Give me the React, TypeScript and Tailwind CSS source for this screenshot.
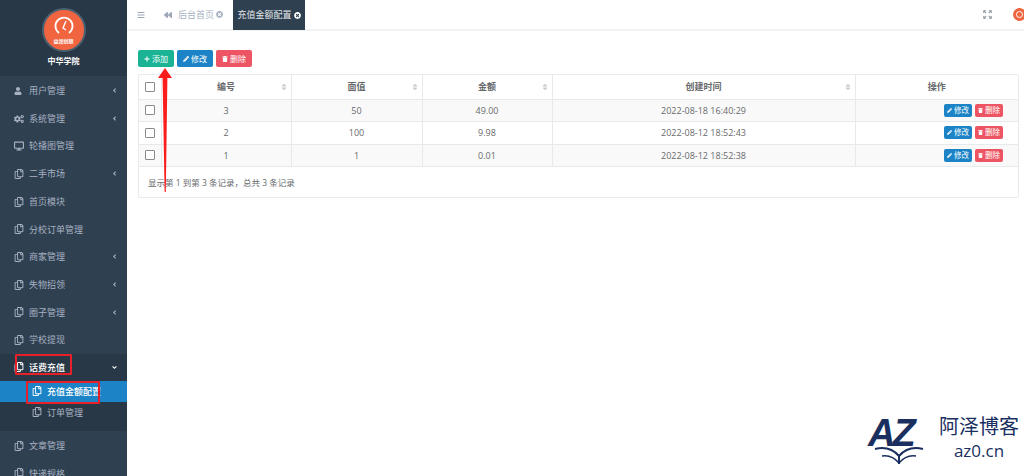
import React from 'react';
import {
  FaAngleDown,
  FaAngleLeft,
  FaBars,
  FaCogs,
  FaDesktop,
  FaBackward,
  FaPencilAlt,
  FaPlus,
  FaRegCopy,
  FaSort,
  FaTimesCircle,
  FaTrash,
  FaUser,
} from 'react-icons/fa';

const font = 'font-["Open_Sans","Noto_Sans_CJK_SC",sans-serif]';

type MenuItem = { label: string; icon: React.ReactNode; arrow?: boolean };

const copyIcon = <FaRegCopy size={10} />;

const topMenu: MenuItem[] = [
  { label: '用户管理', icon: <FaUser size={8} />, arrow: true },
  { label: '系统管理', icon: <FaCogs size={10} />, arrow: true },
  { label: '轮播图管理', icon: <FaDesktop size={10} /> },
  { label: '二手市场', icon: copyIcon, arrow: true },
  { label: '首页模块', icon: copyIcon },
  { label: '分校订单管理', icon: copyIcon },
  { label: '商家管理', icon: copyIcon, arrow: true },
  { label: '失物招领', icon: copyIcon, arrow: true },
  { label: '圈子管理', icon: copyIcon, arrow: true },
  { label: '学校提现', icon: copyIcon },
];

const rows = [
  { id: 3, face: '50', amount: '49.00', time: '2022-08-18 16:40:29' },
  { id: 2, face: '100', amount: '9.98', time: '2022-08-12 18:52:43' },
  { id: 1, face: '1', amount: '0.01', time: '2022-08-12 18:52:38' },
];

const Box = () => <span className="block w-[8px] h-[8px] box-content border border-[#8a8a8a] rounded-[1px] bg-white" />;

const MenuRow: React.FC<{ item: MenuItem }> = ({ item }) => (
  <div className="h-[27.7px] flex items-center pl-[14px] pr-[9px] text-[#a7b1c2]">
    <span className="w-[15px] flex justify-start">{item.icon}</span>
    <span className="text-[9px] ml-[0px] flex-1">{item.label}</span>
    {item.arrow && <FaAngleLeft size={7} />}
  </div>
);

const Sidebar = () => (
  <aside className="w-[127px] h-[476px] shrink-0 overflow-hidden bg-[#2f4050]">
    <div className="h-[76px] bg-[#293846] flex flex-col items-center pt-[8px]">
      <div className="w-[44px] h-[44px] rounded-full bg-[#f0653f] border-[2px] border-[#4a6172] flex flex-col items-center justify-center">
        <svg width="22" height="22" viewBox="0 0 22 22" fill="none" stroke="#fff" strokeWidth="1.8">
          <path d="M6 17a8.5 8.5 0 1 1 10 0" />
          <path d="M13 5l-3 7 3 2" strokeWidth="1.4" />
        </svg>
        <span className="text-[5px] leading-[6px] text-white font-bold">益润创想</span>
      </div>
      <div className="mt-[3px] text-[8px] font-bold text-white">中华学院</div>
    </div>
    <nav>
      <div className="pt-[1px]">
        {topMenu.map(item => (
          <MenuRow key={item.label} item={item} />
        ))}
      </div>
      <div className="h-[77px] bg-[#293846]">
        <div className="h-[27px] flex items-center pl-[14px] pr-[9px] text-white">
          <span className="w-[15px]">{copyIcon}</span>
          <span className="text-[9px] flex-1 font-medium">话费充值</span>
          <FaAngleDown size={7} />
        </div>
        <div className="h-[21px] bg-[#1c84c6] flex items-center pl-[32px] text-white">
          <span className="w-[15px]">{copyIcon}</span>
          <span className="text-[9px] font-medium">充值金额配置</span>
        </div>
        <div className="h-[21px] flex items-center pl-[32px] text-[#a7b1c2]">
          <span className="w-[15px]">{copyIcon}</span>
          <span className="text-[9px]">订单管理</span>
        </div>
      </div>
      <div className="pt-[1px]">
        <MenuRow item={{ label: '文章管理', icon: copyIcon }} />
        <MenuRow item={{ label: '快递规格', icon: copyIcon }} />
      </div>
    </nav>
  </aside>
);

const TopBar = () => (
  <header className="h-[31px] flex items-stretch border-b-2 border-[#f3f3f4] bg-white">
    <div className="w-[18px] flex items-center justify-end text-[#9ea6b9]">
      <FaBars size={8} />
    </div>
    <div className="w-[27px] flex items-center justify-end text-[#9ea6b9]">
      <FaBackward size={8} />
    </div>
    <div className="ml-[6px] w-[54px] flex items-center gap-[2px] text-[9px] text-[#a7b1c2]">
      后台首页 <FaTimesCircle size={7} />
    </div>
    <div className="ml-[1px] w-[72px] h-[30px] bg-[#2f4050] flex items-center justify-center gap-[2px] text-[9px] text-[#e4e7ea]">
      充值金额配置 <FaTimesCircle size={7} className="text-white" />
    </div>
    <div className="flex-1" />
    <div className="w-[30px] flex items-center text-[#8f98a3]">
      <svg width="9" height="9" viewBox="0 0 9 9" fill="none" stroke="currentColor" strokeWidth="1.1">
        <path d="M0.8 0.8l2.4 2.4M8.2 0.8L5.8 3.2M0.8 8.2l2.4-2.4M8.2 8.2L5.8 5.8" />
        <path d="M0.8 3V0.8H3M6 0.8h2.2V3M0.8 6v2.2H3M8.2 6v2.2H6" />
      </svg>
    </div>
    <div className="w-[11px] overflow-hidden flex items-center">
      <div className="w-[13px] h-[13px] shrink-0 rounded-full bg-[#f0653f] flex items-center justify-center">
        <span className="block w-[7px] h-[7px] rounded-full border border-white" />
      </div>
    </div>
  </header>
);

const Btn: React.FC<{ color: string; children: React.ReactNode }> = ({ color, children }) => (
  <span className={`inline-flex items-center gap-[2px] h-[17px] px-[6px] rounded-[2px] text-[8px] text-white ${color}`}>
    {children}
  </span>
);

const SmallBtn: React.FC<{ color: string; children: React.ReactNode }> = ({ color, children }) => (
  <span className={`inline-flex items-center gap-[2px] h-[13px] px-[3px] rounded-[2px] text-[7.5px] text-white ${color}`}>
    {children}
  </span>
);

const Th: React.FC<{ label: string; sort?: boolean }> = ({ label, sort = true }) => (
  <th className="relative border-l border-[#e7eaec] font-semibold text-[9px] text-[#676a6c]">
    {label}
    {sort && <FaSort size={8} className="absolute right-[3px] top-[8px] text-[#c8cdd1]" />}
  </th>
);

const Td: React.FC<{ children: React.ReactNode }> = ({ children }) => (
  <td className="border-l border-[#e7eaec] text-center text-[9px] text-[#676a6c]">{children}</td>
);

const Content = () => (
  <main className="pl-[11px] pr-[5px] pt-[19px]">
    <div className="flex gap-[3px]">
      <Btn color="bg-[#1ab394]">
        <FaPlus size={6} /> 添加
      </Btn>
      <Btn color="bg-[#1c84c6]">
        <FaPencilAlt size={6} /> 修改
      </Btn>
      <Btn color="bg-[#ed5565]">
        <FaTrash size={6} /> 删除
      </Btn>
    </div>
    <div className="mt-[7px] h-[124px] border border-[#e7eaec] rounded-[2px]">
      <table className="w-full table-fixed border-collapse">
        <colgroup>
          <col className="w-[22px]" />
          <col className="w-[130px]" />
          <col className="w-[131px]" />
          <col className="w-[130px]" />
          <col className="w-[303px]" />
          <col />
        </colgroup>
        <thead>
          <tr className="h-[24px] border-b border-[#e7eaec]">
            <th className="pl-[6px]">
              <Box />
            </th>
            <Th label="编号" />
            <Th label="面值" />
            <Th label="金额" />
            <Th label="创建时间" />
            <Th label="操作" sort={false} />
          </tr>
        </thead>
        <tbody>
          {rows.map((r, i) => (
            <tr key={r.id} className={`h-[22.6px] border-b border-[#e7eaec] ${i % 2 === 0 ? 'bg-[#f9f9f9]' : 'bg-white'}`}>
              <td className="pl-[6px]">
                <Box />
              </td>
              <Td>{r.id}</Td>
              <Td>{r.face}</Td>
              <Td>{r.amount}</Td>
              <Td>{r.time}</Td>
              <td className="border-l border-[#e7eaec] pr-[15px]">
                <div className="flex justify-end gap-[3px]">
                  <SmallBtn color="bg-[#1c84c6]">
                    <FaPencilAlt size={5} /> 修改
                  </SmallBtn>
                  <SmallBtn color="bg-[#ed5565]">
                    <FaTrash size={5} /> 删除
                  </SmallBtn>
                </div>
              </td>
            </tr>
          ))}
        </tbody>
      </table>
      <div className="pl-[9px] pt-[10px] text-[8.5px] text-[#676a6c]">显示第 1 到第 3 条记录，总共 3 条记录</div>
    </div>
  </main>
);

const Watermark = () => (
  <div className="absolute left-[868px] top-[414px] w-[156px] h-[54px] bg-white flex items-start">
    <div className="relative w-[66px] h-[50px]">
      <span className='absolute left-0 top-[-3px] text-[38px] leading-[44px] font-["Liberation_Sans"] font-bold italic tracking-[-3px] text-[#1a2f5f]'>
        AZ
      </span>
      <svg className="absolute left-[4px] top-[32px]" width="54" height="20" viewBox="0 0 54 20" fill="none" stroke="#1a2f5f" strokeWidth="2">
        <path d="M3 3c8-2 17-1 24 7 7-8 16-9 24-7" />
        <path d="M27 10v8" />
        <path d="M10 10c6-1 12 1 17 7 5-6 11-8 17-7" strokeWidth="1.5" />
      </svg>
    </div>
    <div className="ml-[5px] flex flex-col items-center">
      <span className="text-[20px] leading-[26px] text-[#1a2f5f]">阿泽博客</span>
      <span className='text-[17px] leading-[22px] font-["Open_Sans"] text-[#1a2f5f]'>az0.cn</span>
    </div>
  </div>
);

const Annotations = () => (
  <>
    <div className="absolute left-[15px] top-[354px] w-[57px] h-[21px] border-2 border-[#e8202a] rounded-[1px]" />
    <div className="absolute left-[26px] top-[381px] w-[74px] h-[23px] border-2 border-[#e8202a] rounded-[1px]" />
    <svg className="absolute left-[155px] top-[68px]" width="20" height="125" viewBox="0 0 20 125">
      <path d="M10 0L17 10H12.4L10.8 124H9.6L7.6 10H3Z" fill="#fb1c1c" />
    </svg>
  </>
);

export default function App() {
  return (
    <div className={`relative w-[1024px] h-[476px] overflow-hidden flex bg-white ${font}`}>
      <Sidebar />
      <div className="flex-1">
        <TopBar />
        <Content />
      </div>
      <Annotations />
      <Watermark />
    </div>
  );
}
